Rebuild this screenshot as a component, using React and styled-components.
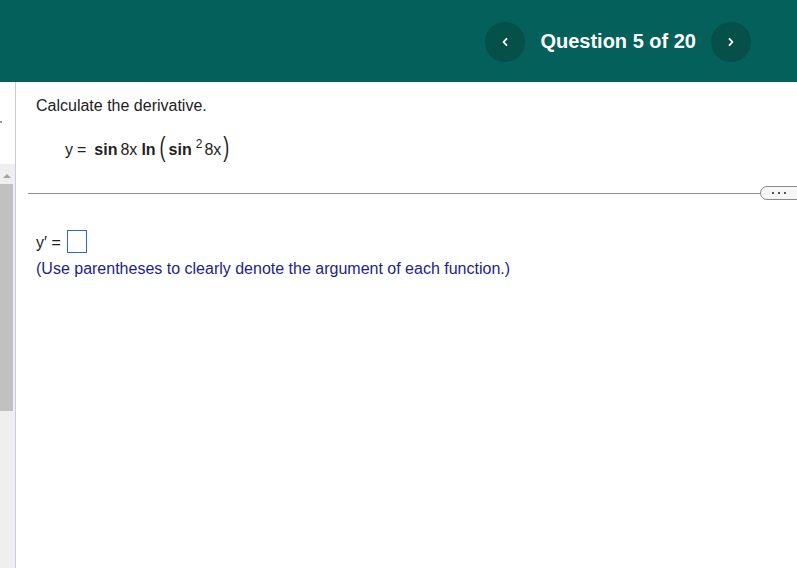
import React from "react";
import styled, { createGlobalStyle } from "styled-components";

const Global = createGlobalStyle`
  html, body { margin: 0; padding: 0; }
  body {
    width: 797px;
    height: 568px;
    overflow: hidden;
    background: #ffffff;
    font-family: "Liberation Sans", Arial, sans-serif;
    color: #222;
  }
`;

const Page = styled.div`
  display: flex;
  flex-direction: column;
  height: 568px;
`;

const Header = styled.header`
  height: 82px;
  flex-shrink: 0;
  background: #04605a;
  display: flex;
  align-items: center;
  justify-content: flex-end;
  padding-right: 46px;
  padding-top: 1px;
  box-sizing: border-box;
`;

const NavGroup = styled.div`
  display: flex;
  align-items: center;
  gap: 13px;
`;

const NavButton = styled.button`
  width: 40px;
  height: 40px;
  border-radius: 50%;
  border: none;
  background: #055049;
  color: #ffffff;
  display: flex;
  align-items: center;
  justify-content: center;
  padding: 0;
  cursor: pointer;
`;

const NavTitle = styled.div`
  color: #ffffff;
  font-weight: bold;
  font-size: 20px;
  padding: 0 2px;
`;

const Body = styled.div`
  flex: 1;
  display: flex;
  min-height: 0;
`;

const Sidebar = styled.aside`
  width: 15px;
  flex-shrink: 0;
  border-right: 1px solid #c9cbdc;
  display: flex;
  flex-direction: column;
`;

const SideTop = styled.div`
  height: 82px;
  flex-shrink: 0;
  padding-top: 39px;
  box-sizing: border-box;
`;

const SideMark = styled.div`
  width: 2px;
  height: 2px;
  background: #9a9a9a;
`;

const Track = styled.div`
  flex: 1;
  background: #f0efef;
  display: flex;
  flex-direction: column;
  align-items: flex-start;
  padding-top: 10px;
`;

const ArrowUp = styled.div`
  width: 0;
  height: 0;
  margin-left: 3px;
  border-left: 4px solid transparent;
  border-right: 4px solid transparent;
  border-bottom: 4px solid #a3a3a3;
`;

const Thumb = styled.div`
  width: 13px;
  height: 227px;
  margin-top: 6px;
  background: #c1c1c1;
`;

const Main = styled.main`
  flex: 1;
  padding: 15px 0 0 12px;
  min-width: 0;
`;

const Question = styled.div`
  padding-left: 8px;
`;

const Prompt = styled.div`
  font-size: 16px;
  line-height: 18px;
  color: #222;
`;

const Equation = styled.div`
  font-size: 16px;
  line-height: 26px;
  margin-top: 21px;
  padding-left: 29px;
  color: #222;
  white-space: nowrap;
`;

const Sym = styled.span`
  display: inline-block;
  font-weight: ${(p) => (p.$bold ? "bold" : "normal")};
  margin-left: ${(p) => p.$ml || 0}px;
`;

const Paren = styled.span`
  display: inline-block;
  font-size: 18px;
  transform: scaleY(1.5);
  transform-origin: 50% 62%;
  margin-left: ${(p) => p.$ml || 0}px;
`;

const Sup = styled.sup`
  font-size: 12px;
  vertical-align: 0;
  position: relative;
  top: -7px;
  margin-left: 4px;
  margin-right: 2px;
`;

const DividerRow = styled.div`
  display: flex;
  align-items: center;
  margin-top: 22px;
  margin-right: -12px;
`;

const Rule = styled.div`
  flex: 1;
  height: 1px;
  background: #8f8f8f;
`;

const MorePill = styled.div`
  width: 49px;
  height: 14px;
  flex-shrink: 0;
  border: 1px solid #8a8a8a;
  border-radius: 7px;
  background: #f6f6f6;
  display: flex;
  align-items: center;
  padding-left: 11px;
  gap: 4px;
  box-sizing: border-box;
`;

const Dot = styled.span`
  width: 2px;
  height: 2px;
  background: #555;
`;

const Answer = styled.div`
  padding-left: 8px;
  margin-top: 31px;
`;

const AnswerLine = styled.div`
  display: flex;
  align-items: flex-end;
  font-size: 16px;
  color: #222;
  height: 22px;
`;

const AnswerLabel = styled.span`
  line-height: 18px;
  margin-bottom: 1px;
`;

const AnswerBox = styled.span`
  display: inline-block;
  width: 18px;
  height: 21px;
  border: 1px solid #2e64d6;
  margin-left: 6px;
  background: #fff;
`;

const Hint = styled.div`
  font-size: 16px;
  line-height: 18px;
  margin-top: 7px;
  color: #1e1e88;
`;

function Chevron({ dir }) {
  return (
    <svg width="10" height="10" viewBox="0 0 10 10" fill="none">
      <path
        d={dir === "left" ? "M6.5 1.8 L3.5 5 L6.5 8.2" : "M3.5 1.8 L6.5 5 L3.5 8.2"}
        stroke="#ffffff"
        strokeWidth="1.8"
        strokeLinecap="round"
        strokeLinejoin="round"
      />
    </svg>
  );
}

export default function App() {
  return (
    <>
      <Global />
      <Page>
        <Header>
          <NavGroup>
            <NavButton aria-label="Previous question">
              <Chevron dir="left" />
            </NavButton>
            <NavTitle>Question 5 of 20</NavTitle>
            <NavButton aria-label="Next question">
              <Chevron dir="right" />
            </NavButton>
          </NavGroup>
        </Header>
        <Body>
          <Sidebar>
            <SideTop>
              <SideMark />
            </SideTop>
            <Track>
              <ArrowUp />
              <Thumb />
            </Track>
          </Sidebar>
          <Main>
            <Question>
              <Prompt>Calculate the derivative.</Prompt>
              <Equation>
                <Sym>y</Sym>
                <Sym $ml={4}>=</Sym>
                <Sym $bold $ml={8}>sin</Sym>
                <Sym $ml={3}>8x</Sym>
                <Sym $bold $ml={4}>ln</Sym>
                <Paren $ml={4}>(</Paren>
                <Sym $bold $ml={3}>sin</Sym>
                <Sup>2</Sup>
                <Sym>8x</Sym>
                <Paren $ml={2}>)</Paren>
              </Equation>
            </Question>
            <DividerRow>
              <Rule />
              <MorePill>
                <Dot />
                <Dot />
                <Dot />
              </MorePill>
            </DividerRow>
            <Answer>
              <AnswerLine>
                <AnswerLabel>y′ =</AnswerLabel>
                <AnswerBox />
              </AnswerLine>
              <Hint>(Use parentheses to clearly denote the argument of each function.)</Hint>
            </Answer>
          </Main>
        </Body>
      </Page>
    </>
  );
}
